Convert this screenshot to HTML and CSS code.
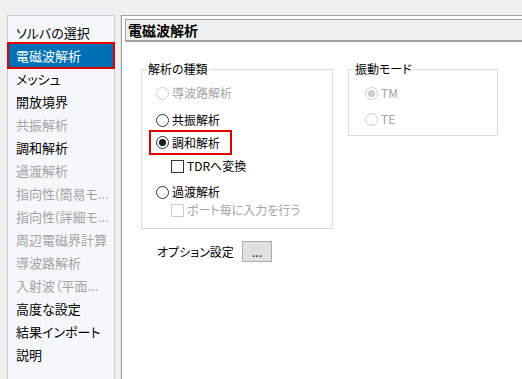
FILE: index.html
```html
<!DOCTYPE html>
<html lang="ja">
  <head>
    <meta charset="UTF-8" />
    <title>電磁波解析</title>
    <link rel="stylesheet" href="styles.css">
  </head>
  <body>
    <div class="window">
      <ul class="nav">
        <li>ソルバの選択</li>
        <li class="selected">電磁波解析</li>
        <li>メッシュ</li>
        <li>開放境界</li>
        <li class="disabled">共振解析</li>
        <li>調和解析</li>
        <li class="disabled">過渡解析</li>
        <li class="disabled">指向性(簡易モ...</li>
        <li class="disabled">指向性(詳細モ...</li>
        <li class="disabled">周辺電磁界計算</li>
        <li class="disabled">導波路解析</li>
        <li class="disabled">入射波（平面...</li>
        <li>高度な設定</li>
        <li>結果インポート</li>
        <li>説明</li>
      </ul>

      <div class="panel">
        <div class="panel-title">電磁波解析</div>

        <div class="groups">
          <fieldset class="group group-type">
            <legend>解析の種類</legend>
            <div class="opt disabled row-1"><span class="radio"></span>導波路解析</div>
            <div class="opt row-2"><span class="radio"></span>共振解析</div>
            <div class="opt row-3">
              <span class="highlight"><span class="radio checked"></span>調和解析</span>
            </div>
            <div class="opt sub row-4"><span class="check"></span>TDRへ変換</div>
            <div class="opt row-5"><span class="radio"></span>過渡解析</div>
            <div class="opt sub disabled row-6"><span class="check"></span>ポート毎に入力を行う</div>
          </fieldset>

          <fieldset class="group group-mode">
            <legend>振動モード</legend>
            <div class="opt disabled row-1"><span class="radio checked"></span>TM</div>
            <div class="opt disabled row-te"><span class="radio"></span>TE</div>
          </fieldset>
        </div>

        <div class="option-row">
          <span class="option-label">オプション設定</span>
          <button class="dots-btn">...</button>
        </div>
      </div>
    </div>
  </body>
</html>
```

FILE: styles.css
```css
:root {
  --bg: #f0f0f0;
  --text: #000;
  --disabled: #a3a3a3;
  --select: #0070b6;
  --mark: #e00000;
}

* {
  margin: 0;
  padding: 0;
  box-sizing: border-box;
}

body {
  font-family: "Noto Sans CJK JP", "Noto Sans", sans-serif;
  font-feature-settings: "palt";
  background-color: var(--bg);
  color: var(--text);
  height: 100vh;
  overflow: hidden;
}

.window {
  display: flex;
  height: 100%;
  padding-top: 15px;
}

/* left list */
.nav {
  list-style: none;
  width: 108px;
  margin-left: 7px;
  padding-top: 5px;
  background-color: #f6f7fa;
  border: 1px solid #c9cbd6;
  border-bottom: none;
  font-size: 13px;
}

.nav li {
  height: 23px;
  line-height: 23px;
  margin: 0 1px;
  padding-left: 7px;
  white-space: nowrap;
}

.nav li.disabled {
  color: var(--disabled);
}

.nav li.selected {
  background-color: var(--select);
  color: #fff;
  outline: 2px solid var(--mark);
}

/* right panel */
.panel {
  flex: 1;
  margin-left: 6px;
  background-color: #fff;
  border-left: 1px solid #a0a0a0;
  border-top: 1px solid #a0a0a0;
  box-shadow: -1px 0 0 #e2e2e2;
}

.panel-title {
  margin: 3px 0 0 3px;
  height: 23px;
  padding-left: 2px;
  line-height: 20px;
  font-size: 14px;
  font-weight: 700;
  background-color: var(--bg);
  border-top: 1px solid #a0a0a0;
  border-left: 1px solid #a0a0a0;
  border-bottom: 2px solid #a0a0a0;
}

.groups {
  display: flex;
  align-items: flex-start;
  margin: 19px 0 0 19px;
}

.group {
  border: 1px solid #d9d9d9;
  font-size: 12px;
  display: flex;
  flex-direction: column;
  align-items: flex-start;
}

.group legend {
  padding: 0 2px;
  line-height: 16px;
  font-size: 12px;
}

.group-type {
  width: 192px;
  padding: 0 0 10px 14px;
}

.group-type legend {
  margin-left: -10px;
}

.group-mode {
  width: 150px;
  margin-left: 15px;
  padding: 0 0 8px 16px;
}

.group-mode legend {
  margin-left: -12px;
}

.opt {
  display: flex;
  align-items: center;
  height: 16px;
  line-height: 16px;
  white-space: nowrap;
}

.opt.disabled {
  color: var(--disabled);
}

.opt.sub {
  padding-left: 15px;
}

.row-1 { margin-top: 8px; }
.row-2 { margin-top: 11px; }
.row-3 { margin-top: 7px; }
.row-4 { margin-top: 7px; }
.row-5 { margin-top: 10px; }
.row-6 { margin-top: 2px; }
.row-te { margin-top: 10px; }

.highlight {
  display: flex;
  align-items: center;
  height: 25px;
  margin: -5px -10px -4px -7px;
  padding: 0 10px 0 5px;
  border: 2px solid var(--mark);
}

.radio {
  flex: none;
  display: inline-flex;
  align-items: center;
  justify-content: center;
  width: 13px;
  height: 13px;
  margin-right: 3px;
  border: 1px solid #333;
  border-radius: 50%;
  background-color: #fff;
}

.radio.checked::after {
  content: "";
  width: 7px;
  height: 7px;
  border-radius: 50%;
  background-color: #1a1a1a;
}

.check {
  flex: none;
  width: 13px;
  height: 13px;
  margin-right: 3px;
  border: 1px solid #333;
  background-color: #fff;
}

.disabled .radio,
.disabled .check {
  border-color: #cccccc;
}

.disabled .radio.checked::after {
  background-color: #cccccc;
}

.option-row {
  display: flex;
  align-items: center;
  margin: 12px 0 0 35px;
  font-size: 12px;
}

.option-label {
  width: 85px;
}

.dots-btn {
  width: 30px;
  height: 21px;
  font-family: inherit;
  font-size: 12px;
  line-height: 14px;
  color: #1a1a1a;
  background-color: #e1e1e1;
  border: 1px solid #adadad;
}
```
